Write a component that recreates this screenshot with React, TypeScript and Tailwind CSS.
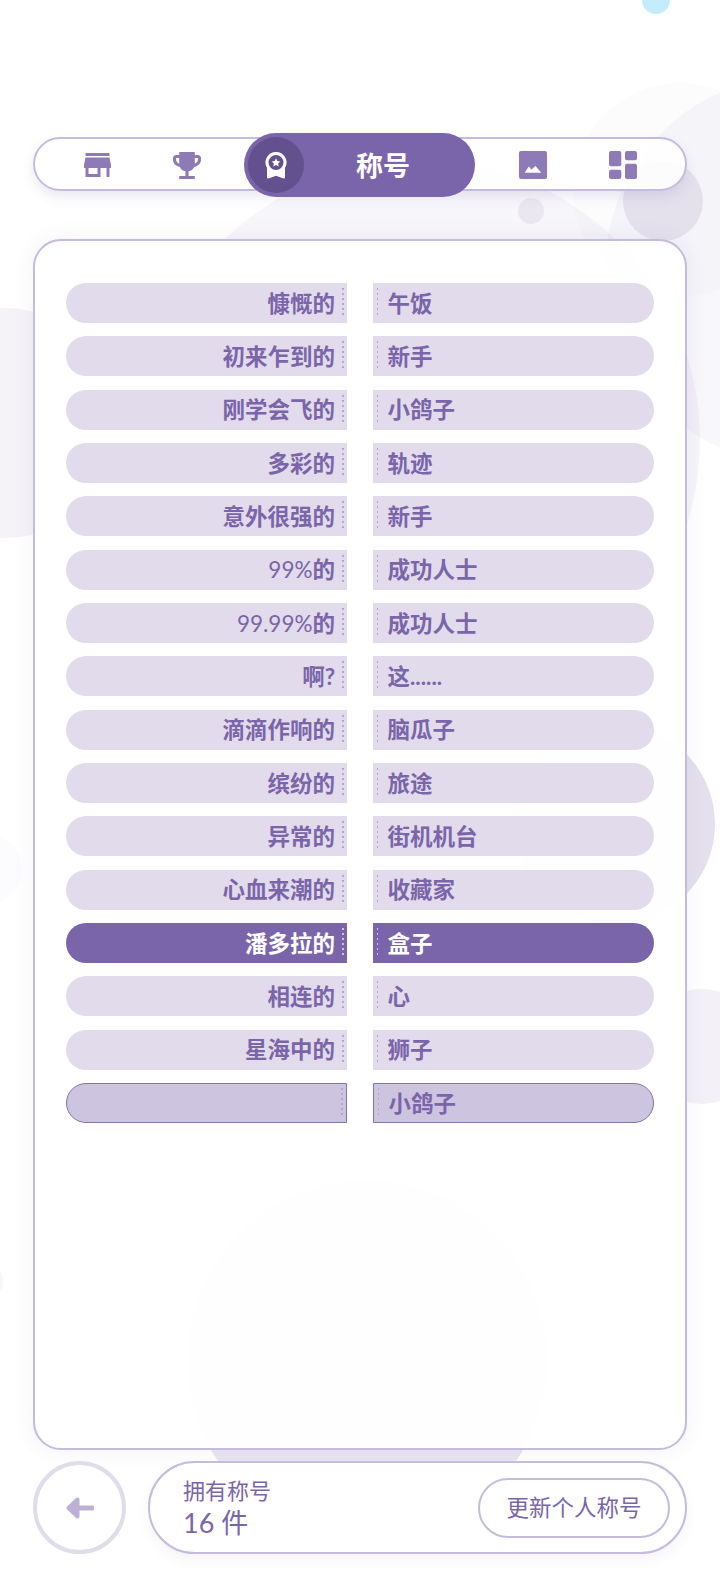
import type { FC } from 'react'

interface TitleRow {
  lead?: string
  left: string
  right: string
  state?: 'active' | 'current'
}

const rows: TitleRow[] = [
  { left: '慷慨的', right: '午饭' },
  { left: '初来乍到的', right: '新手' },
  { left: '刚学会飞的', right: '小鸽子' },
  { left: '多彩的', right: '轨迹' },
  { left: '意外很强的', right: '新手' },
  { lead: '99%', left: '的', right: '成功人士' },
  { lead: '99.99%', left: '的', right: '成功人士' },
  { left: '啊?', right: '这......' },
  { left: '滴滴作响的', right: '脑瓜子' },
  { left: '缤纷的', right: '旅途' },
  { left: '异常的', right: '街机机台' },
  { left: '心血来潮的', right: '收藏家' },
  { left: '潘多拉的', right: '盒子', state: 'active' },
  { left: '相连的', right: '心' },
  { left: '星海中的', right: '狮子' },
  { left: '', right: '小鸽子', state: 'current' },
]

const ShopIcon = () => (
  <svg width="27" height="24" viewBox="3 4 18 16" fill="#8f7ab8">
    <path d="M20 4H4v2h16V4zm1 10v-2l-1-5H4l-1 5v2h1v6h10v-6h4v6h2v-6h1zm-9 4H6v-4h6v4z" />
  </svg>
)

const TrophyIcon = () => (
  <svg width="28" height="27" viewBox="3 3 18 18" preserveAspectRatio="none" fill="#8f7ab8">
    <path d="M19 5h-2V3H7v2H5c-1.100 0-2 .9-2 2v1c0 2.550 1.920 4.630 4.390 4.940.63 1.500 1.980 2.630 3.610 2.960V19H7v2h10v-2h-4v-3.100c1.630-.33 2.980-1.460 3.610-2.960C19.080 12.630 21 10.550 21 8V7c0-1.100-.9-2-2-2zM5 8V7h2v3.820C5.840 10.400 5 9.300 5 8zm14 0c0 1.300-.84 2.400-2 2.820V7h2v1z" />
  </svg>
)

const BadgeIcon = () => (
  <svg width="22" height="27" viewBox="0 0 22 27" fill="#fff">
    <path
      fillRule="evenodd"
      d="M11 0a10.500 10.500 0 0 1 9 15.900V25.500a1 1 0 0 1-1.400.9L11 23.800l-7.600 2.600A1 1 0 0 1 2 25.500V15.900A10.500 10.500 0 0 1 11 0zm0 3a7.500 7.500 0 1 0 0 15 7.500 7.500 0 0 0 0-15z"
    />
    <path d="M11 6.300l1.300 2.700 3 .4-2.200 2.100.6 3L11 13l-2.700 1.500.6-3-2.200-2.100 3-.4z" />
  </svg>
)

const ImageIcon = () => (
  <svg width="28" height="28" viewBox="0 0 28 28">
    <rect width="28" height="28" rx="2" fill="#8f7ab8" />
    <path d="M5.700 21.700l4-6.200 2.800 3 4-3.500 5.800 6.700z" fill="#fff" />
  </svg>
)

const LayoutIcon = () => (
  <svg width="28" height="28" viewBox="0 0 28 28" fill="#8f7ab8">
    <rect x="0" y="0" width="12.300" height="15.300" rx="2" />
    <rect x="16" y="0" width="12" height="9.300" rx="2" />
    <rect x="0" y="18.700" width="12.300" height="9.300" rx="2" />
    <rect x="16" y="12.700" width="12" height="15.300" rx="2" />
  </svg>
)

const Row: FC<{ row: TitleRow }> = ({ row }) => {
  const skin =
    row.state === 'active'
      ? 'bg-[#7b65aa] text-white'
      : row.state === 'current'
        ? 'bg-[#cdc4e0] text-[#7b65aa] border-[1.5px] border-[#8472ae]'
        : 'bg-[#e1dbeb] text-[#7b65aa]'
  const dots =
    row.state === 'active'
      ? 'bg-[repeating-linear-gradient(to_bottom,#cfc5e3_0,#cfc5e3_2px,transparent_2px,transparent_5px)]'
      : 'bg-[repeating-linear-gradient(to_bottom,#b3a6cf_0,#b3a6cf_2px,transparent_2px,transparent_5px)]'

  return (
    <div className="flex h-10 gap-[26px]">
      <div className={`flex flex-1 items-center justify-end rounded-l-[20px] ${skin}`}>
        <span className="pt-[2px] text-[22.5px] font-bold leading-none">
          {row.lead && <span className="font-normal">{row.lead}</span>}
          {row.left}
        </span>
        <div className={`ml-[7px] mr-[3.5px] h-[30px] w-[1.5px] ${dots}`} />
      </div>
      <div className={`flex flex-1 items-center rounded-r-[20px] ${skin}`}>
        <div className={`ml-[3.5px] mr-[9.5px] h-[30px] w-[1.5px] ${dots}`} />
        <span className="pt-[2px] text-[22.5px] font-bold leading-none">{row.right}</span>
      </div>
    </div>
  )
}

const App: FC = () => {
  return (
    <div
      className="relative h-[1588px] w-[720px] overflow-hidden bg-white"
      style={{ fontFamily: 'Lato, "Noto Sans CJK SC", sans-serif' }}
    >
      {/* 背景装饰 */}
      <div className="absolute left-[642px] top-[-14px] h-7 w-7 rounded-full bg-[#c4ecfa]" />
      <div className="absolute left-[573px] top-[83px] h-[214px] w-[214px] rounded-full bg-[#7b65aa]/[0.02]" />
      <div className="absolute left-[605px] top-[75px] h-[390px] w-[390px] rounded-full bg-[#7b65aa]/[0.05]" />
      <div className="absolute left-[140px] top-[160px] h-[560px] w-[560px] rounded-full bg-[#7b65aa]/[0.06]" />
      <div className="absolute left-[623px] top-[161px] h-20 w-20 rounded-full bg-[#e4e1ed]" />
      <div className="absolute left-[518px] top-[198px] h-[26px] w-[26px] rounded-full bg-[#eae7f1]" />
      <div className="absolute left-[-110px] top-[308px] h-[230px] w-[230px] rounded-full bg-[#7b65aa]/[0.08]" />
      <div className="absolute left-[515px] top-[724px] h-[200px] w-[200px] rounded-full bg-[#7b65aa]/[0.2]" />
      <div className="absolute left-[-48px] top-[834px] h-[70px] w-[70px] rounded-full bg-[#7b65aa]/[0.025]" />
      <div className="absolute left-[645px] top-[989px] h-[115px] w-[115px] rounded-full bg-[#7b65aa]/[0.09]" />
      <div className="absolute left-[-37px] top-[1261px] h-10 w-10 rounded-full bg-[#7b65aa]/[0.06]" />
      <div className="absolute left-[187px] top-[1180px] h-[360px] w-[360px] rounded-full bg-[#7b65aa]/[0.17]" />

      <div className="relative flex h-full flex-col px-[33px] pt-[133px]">
        {/* 顶部标签栏 */}
        <div className="relative flex h-16 items-center">
          <div className="absolute inset-x-0 top-[4px] h-[54px] rounded-full border-2 border-[#c5bbdd] bg-white/90 shadow-[0_6px_12px_rgba(123,101,170,0.14)]" />
          <div className="relative flex w-full items-center">
            <div className="ml-[51px] flex">
              <ShopIcon />
            </div>
            <div className="ml-[62px] flex">
              <TrophyIcon />
            </div>
            <div className="ml-[43px] flex h-16 w-[231px] items-center rounded-full bg-[#7b65aa] pl-1">
              <div className="flex h-14 w-14 items-center justify-center rounded-full bg-[#63508f]">
                <BadgeIcon />
              </div>
              <span className="ml-[52px] text-[27px] font-bold leading-none text-white">称号</span>
            </div>
            <div className="ml-[44px] flex">
              <ImageIcon />
            </div>
            <div className="ml-[62px] flex">
              <LayoutIcon />
            </div>
          </div>
        </div>

        {/* 称号列表 */}
        <div className="mt-[42px] h-[1211px] rounded-[28px] border-2 border-[#c5bbdd] bg-white/[0.95] px-[31px] pt-[42px] shadow-[0_0_20px_rgba(123,101,170,0.1)]">
          <div className="flex flex-col gap-[13.33px]">
            {rows.map((row, index) => (
              <Row key={index} row={row} />
            ))}
          </div>
        </div>

        {/* 底部 */}
        <div className="mt-[11px] flex h-[93px] gap-[22px]">
          <div className="flex h-[93px] w-[93px] shrink-0 items-center justify-center rounded-full border-4 border-[#e1dcea] bg-white">
            <svg width="28" height="22" viewBox="0 0 28 22" fill="#bcb0d6" stroke="#bcb0d6" strokeWidth="4" strokeLinecap="round" strokeLinejoin="round">
              <path d="M2.500 11L11.500 2.500V19.500Z" />
              <path d="M10 11H26" strokeWidth="5" />
            </svg>
          </div>
          <div className="flex flex-1 items-center justify-between rounded-full border-2 border-[#c5bbdd] bg-white pl-[33px] pr-[15px] shadow-[0_6px_12px_rgba(123,101,170,0.08)]">
            <div className="flex flex-col text-[#7b65aa]">
              <span className="text-[22px] leading-[30px]">拥有称号</span>
              <span className="text-[27px] leading-[34px]">16 件</span>
            </div>
            <div className="flex h-[60px] w-[192px] items-center justify-center rounded-full border-2 border-[#c5bbdd] bg-white text-[22.5px] text-[#7b65aa]">
              更新个人称号
            </div>
          </div>
        </div>
      </div>
    </div>
  )
}

export default App
